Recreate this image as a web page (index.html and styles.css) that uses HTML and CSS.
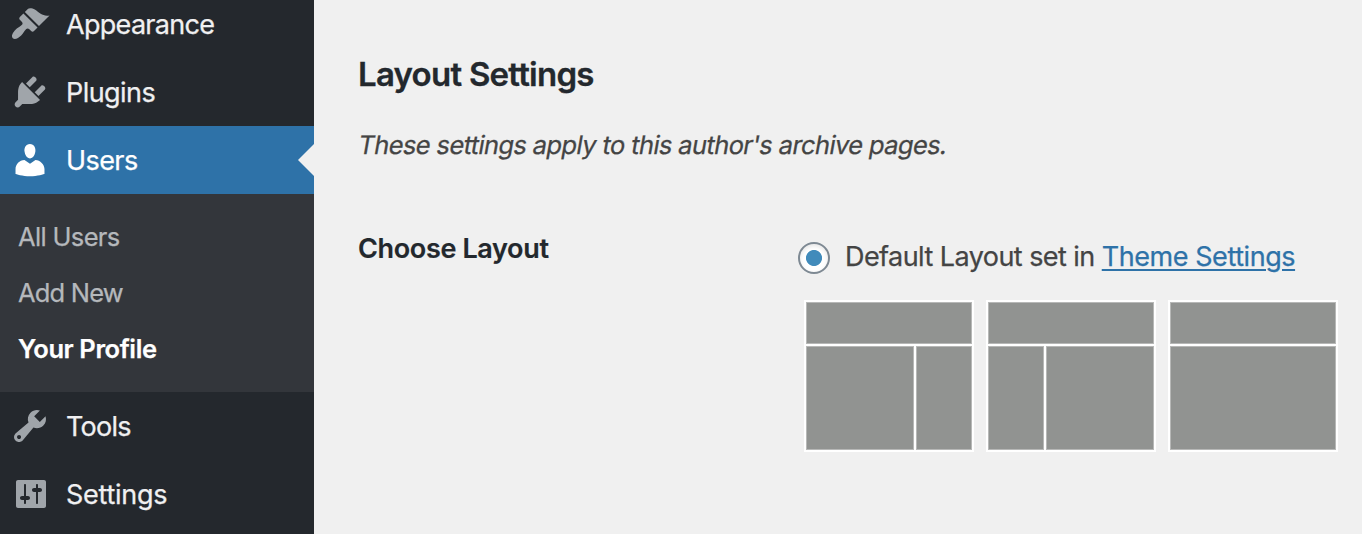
FILE: index.html
```html
<!DOCTYPE html>
<html lang="en">
<head>
<meta charset="utf-8">
<title>Your Profile</title>
<link rel="stylesheet" href="styles.css">
</head>
<body>
<div class="admin">
  <nav class="sidebar">
    <a class="menu-item">
      <svg class="icon" viewBox="0 0 20 20"><path d="M14.48 11.06L7.41 3.99l1.5-1.5c.5-.56 2.3-.47 3.51.32 1.21.8 1.43 1.28 2.91 2.1 1.18.64 2.45 1.26 4.45.85zm-.71.71L6.7 4.7 4.93 6.47c-.39.39-.39 1.02 0 1.41l1.06 1.06c.39.39.39 1.03 0 1.42-.6.6-1.43 1.11-2.21 1.69-.35.26-.7.53-1.01.84C1.43 14.23.4 16.08 1.4 17.07c.99 1 2.84-.03 4.18-1.36.31-.31.58-.66.85-1.02.57-.78 1.08-1.61 1.69-2.21.39-.39 1.02-.39 1.41 0l1.06 1.06c.39.39 1.02.39 1.41 0z"/></svg>
      <span class="label appearance">Appearance</span>
    </a>
    <a class="menu-item">
      <svg class="icon" viewBox="0 0 20 20"><path d="M13.11 4.36L9.87 7.6 8 5.73l3.24-3.24c.35-.34 1.05-.2 1.56.32.52.51.66 1.21.31 1.55zm-8 1.77l.91-1.12 9.01 9.01-1.19.84c-.71.71-2.63 1.16-3.82 1.16H6.14L4.9 17.26c-.59.59-1.54.59-2.12 0-.59-.58-.59-1.53 0-2.12l1.24-1.24v-3.88c0-1.13.4-3.19 1.09-3.89zm7.26 3.97l3.24-3.24c.34-.35 1.04-.21 1.55.31.52.51.66 1.21.31 1.55l-3.24 3.25z"/></svg>
      <span class="label plugins">Plugins</span>
    </a>
    <a class="menu-item current">
      <svg class="icon" viewBox="0 0 20 20"><path d="M10 9.25c-2.27 0-2.73-3.44-2.73-3.44C7 4.02 7.82 2 9.97 2c2.16 0 2.98 2.02 2.71 3.81 0 0-.41 3.44-2.68 3.44zm0 2.57L12.72 10c2.39 0 4.52 2.33 4.52 4.53v2.49s-3.65 1.13-7.24 1.13c-3.65 0-7.24-1.13-7.24-1.13v-2.49c0-2.25 1.94-4.48 4.47-4.48z"/></svg>
      <span class="label users">Users</span>
    </a>
    <div class="submenu">
      <a class="sub-item all-users">All Users</a>
      <a class="sub-item add-new">Add New</a>
      <a class="sub-item active">Your Profile</a>
    </div>
    <a class="menu-item">
      <svg class="icon" viewBox="0 0 20 20"><path d="M16.68 9.77c-1.34 1.34-3.3 1.67-4.95.99l-5.41 6.52c-.99.99-2.59.99-3.58 0s-.99-2.59 0-3.57l6.52-5.42c-.68-1.65-.35-3.61.99-4.95 1.28-1.28 3.12-1.62 4.72-1.06l-2.89 2.89 2.82 2.82 2.86-2.87c.53 1.58.18 3.39-1.08 4.65zM3.81 16.21c.4.39 1.04.39 1.43 0 .4-.4.4-1.04 0-1.43-.39-.4-1.03-.4-1.43 0-.39.39-.39 1.03 0 1.43z"/></svg>
      <span class="label tools">Tools</span>
    </a>
    <a class="menu-item">
      <svg class="icon" viewBox="0 0 20 20"><path d="M18 16V4c0-.55-.45-1-1-1H4c-.55 0-1 .45-1 1v12c0 .55.45 1 1 1h13c.55 0 1-.45 1-1zM8 11h1c.55 0 1 .45 1 1s-.45 1-1 1H8v1.5c0 .28-.22.5-.5.5s-.5-.22-.5-.5V13H6c-.55 0-1-.45-1-1s.45-1 1-1h1V5.5c0-.28.22-.5.5-.5s.5.22.5.5V11zm5-2h-1c-.55 0-1-.45-1-1s.45-1 1-1h1V5.5c0-.28.22-.5.5-.5s.5.22.5.5V7h1c.55 0 1 .45 1 1s-.45 1-1 1h-1v5.5c0 .28-.22.5-.5.5s-.5-.22-.5-.5V9z"/></svg>
      <span class="label settings">Settings</span>
    </a>
  </nav>
  <main class="content">
    <h2 class="title">Layout Settings</h2>
    <p class="description">These settings apply to this author's archive pages.</p>
    <div class="form-row">
      <div class="row-label">Choose Layout</div>
      <div class="field">
        <label class="option"><span class="radio"></span><span class="option-text">Default Layout set in <a class="link">Theme Settings</a></span></label>
        <div class="layouts">
          <div class="thumb right-sidebar"><i class="block header"></i><i class="block"></i><i class="block"></i></div>
          <div class="thumb left-sidebar"><i class="block header"></i><i class="block"></i><i class="block"></i></div>
          <div class="thumb full"><i class="block header"></i><i class="block"></i></div>
        </div>
      </div>
    </div>
  </main>
</div>
</body>
</html>
```
FILE: styles.css
```css
* { box-sizing: border-box; }
body { margin: 0; background: #f0f0f0; font-family: Inter, "Liberation Sans", sans-serif; color: #444; overflow: hidden; }
.admin { display: flex; height: 534px; overflow: hidden; }
.sidebar { flex: none; width: 314px; background: #24282d; margin-top: -10px; height: 544px; }
.menu-item { display: flex; align-items: center; height: 68px; padding-left: 10px; gap: 16px; color: #f0f0f1; position: relative; }
.icon { width: 40px; height: 40px; fill: #a0a5aa; flex: none; }
.label { font-size: 27px; line-height: 36px; padding-top: 2px; letter-spacing: -0.57px; white-space: nowrap; -webkit-text-stroke: 0.25px currentColor; }
.appearance { letter-spacing: -0.7px; }
.tools { letter-spacing: -0.75px; }
.settings { letter-spacing: -0.25px; }
.current { background: #2e72a8; color: #fff; }
.current .icon { fill: #fff; }
.current::after { content: ""; position: absolute; right: 0; top: 18px; border: 16px solid transparent; border-left: 0; border-right-color: #f0f0f0; }
.submenu { background: #33363b; height: 198px; padding: 15px 0 0 18px; }
.sub-item { display: block; height: 56px; line-height: 56px; font-size: 25.5px; letter-spacing: -0.65px; color: #b5b8bc; white-space: nowrap; -webkit-text-stroke: 0.25px currentColor; }
.add-new { letter-spacing: -0.8px; }
.active { color: #fff; font-weight: 600; letter-spacing: -0.4px; }
.content { flex: 1; padding: 53px 0 0 44px; }
.title { margin: 0; font-size: 33px; line-height: 42px; font-weight: 600; letter-spacing: -0.75px; color: #23282d; white-space: nowrap; -webkit-text-stroke: 0.3px currentColor; }
/* Slanted upright letterforms keep the double-storey "a". */
.description { margin: 32px 0 0; font-size: 25.5px; line-height: 36px; letter-spacing: -0.62px; color: #444; white-space: nowrap; -webkit-text-stroke: 0.25px currentColor; transform: skewX(-10deg); transform-origin: 0 22px; }
.form-row { display: flex; margin-top: 67px; }
.row-label { width: 440px; padding-top: 1px; font-size: 27px; line-height: 36px; font-weight: 600; letter-spacing: -0.35px; color: #23282d; -webkit-text-stroke: 0.2px currentColor; }
.option { display: flex; align-items: center; height: 36px; margin-top: 9px; }
.radio { width: 32px; height: 32px; border: 2px solid #7e8993; border-radius: 50%; margin: 2px 15px 0 0; background: radial-gradient(circle, #418bbb 7.6px, #fff 8.4px); box-shadow: inset 0 2px 4px rgba(0,0,0,.1); }
.option-text { font-size: 27px; letter-spacing: -0.56px; color: #444; white-space: nowrap; line-height: 36px; -webkit-text-stroke: 0.25px currentColor; }
.link { color: #2e72a8; letter-spacing: -0.44px; text-decoration: underline; text-decoration-thickness: 2px; text-underline-offset: 3px; }
.layouts { display: flex; gap: 12px; margin: 25px 0 0 6px; }
.thumb { display: grid; width: 170px; height: 152px; padding: 2px; gap: 2px; background: #fff; grid-template-rows: 42px 1fr; }
.block { background: #919391; border: 1px solid #b7b8b7; }
.header { grid-column: 1 / -1; }
.right-sidebar { grid-template-columns: 108px 56px; }
.left-sidebar { grid-template-columns: 56px 108px; }
```
